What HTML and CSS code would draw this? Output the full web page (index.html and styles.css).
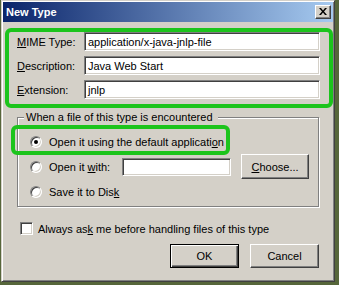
FILE: index.html
```html
<!DOCTYPE html>
<html>
<head>
<meta charset="utf-8">
<link rel="stylesheet" href="styles.css">
</head>
<body>
<div class="window">
  <div class="titlebar">
    <span class="title">New Type</span>
    <span class="close"><svg width="8" height="7" viewBox="0 0 8 7"><path d="M0 0h2l2 2.4L6 0h2L5 3.5 8 7H6L4 4.6 2 7H0l3-3.5z" fill="#000"/></svg></span>
  </div>
  <div class="content">
    <div class="fields">
      <span class="lbl"><u>M</u>IME Type:</span><div class="input">application/x-java-jnlp-file</div>
      <span class="lbl"><u>D</u>escription:</span><div class="input">Java Web Start</div>
      <span class="lbl"><u>E</u>xtension:</span><div class="input">jnlp</div>
    </div>
    <div class="group">
      <span class="legend">When a file of this type is encountered</span>
      <div class="opt"><span class="radio checked"></span><span>Open it using the default applicati<u>o</u>n</span></div>
      <div class="opt"><span class="radio"></span><span class="optlbl">Open it <u>w</u>ith:</span><div class="input small"></div><div class="btn choose"><u>C</u>hoose...</div></div>
      <div class="opt"><span class="radio"></span><span>Save it to Dis<u>k</u></span></div>
    </div>
    <div class="check"><span class="box"></span><span>Always as<u>k</u> me before handling files of this type</span></div>
    <div class="buttons"><div class="btn default">OK</div><div class="btn">Cancel</div></div>
  </div>
  <div class="hl hl1"></div>
  <div class="hl hl2"></div>
</div>
</body>
</html>
```

FILE: styles.css
```css
html, body {
  margin: 0;
  padding: 0;
}
body {
  background: #56663a;
  width: 339px;
  height: 285px;
  overflow: hidden;
  font-family: "Liberation Sans", Arial, sans-serif;
  font-size: 11px;
  color: #000;
}
.window {
  position: relative;
  margin-left: 1px;
  width: 334px;
  height: 282px;
  box-sizing: border-box;
  background: #d4d0c8;
  border: 1px solid;
  border-color: #d4d0c8 #404040 #404040 #d4d0c8;
  padding: 1px;
  box-shadow: inset 1px 1px 0 #fff, inset -1px -1px 0 #808080;
}
.titlebar {
  height: 20px;
  display: flex;
  align-items: center;
  justify-content: space-between;
  padding: 0 2px 0 3px;
  background: linear-gradient(to right, #0a246a, #a6caf0);
}
.title {
  color: #fff;
  font-weight: bold;
  font-size: 11px;
}
.close {
  width: 16px;
  height: 14px;
  box-sizing: border-box;
  background: #d4d0c8;
  border: 1px solid;
  border-color: #fff #404040 #404040 #fff;
  box-shadow: inset -1px -1px 0 #808080;
  display: flex;
  align-items: center;
  justify-content: center;
  padding: 0 1px 1px 0;
}
.content {
  padding: 10px 13px 0 14px;
}
.fields {
  display: grid;
  grid-template-columns: 67px 236px;
  row-gap: 5px;
  align-items: center;
}
.input {
  height: 19px;
  box-sizing: border-box;
  background: #fff;
  border: 1px solid;
  border-color: #808080 #fff #fff #808080;
  box-shadow: inset 1px 1px 0 #404040, inset -1px -1px 0 #d4d0c8;
  padding: 0 3px;
  display: flex;
  align-items: center;
  white-space: nowrap;
}
.group {
  position: relative;
  margin-top: 18px;
  width: 302px;
  height: 90px;
  box-sizing: border-box;
  border: 1px solid #808080;
  box-shadow: 1px 1px 0 #fff, inset 1px 1px 0 #fff;
  padding: 11px 0 0 12px;
}
.legend {
  position: absolute;
  left: 6px;
  top: -7px;
  line-height: 13px;
  padding: 0 5px 0 2px;
  background: #d4d0c8;
}
.opt {
  height: 25px;
  display: flex;
  align-items: center;
}
.radio {
  position: relative;
  width: 12px;
  height: 12px;
  box-sizing: border-box;
  border-radius: 50%;
  background: #fff;
  border: 1px solid;
  border-color: #808080 #fff #fff #808080;
  box-shadow: inset 1px 1px 0 #404040, inset -1px -1px 0 #d4d0c8;
  margin-right: 7px;
  flex: none;
}
.radio.checked::after {
  content: "";
  position: absolute;
  left: 3px;
  top: 3px;
  width: 4px;
  height: 4px;
  border-radius: 50%;
  background: #000;
}
.optlbl {
  width: 73px;
}
.input.small {
  width: 109px;
  height: 18px;
}
.btn {
  height: 24px;
  box-sizing: border-box;
  background: #d4d0c8;
  border: 1px solid;
  border-color: #fff #404040 #404040 #fff;
  box-shadow: inset -1px -1px 0 #808080;
  display: flex;
  align-items: center;
  justify-content: center;
  width: 69px;
}
.btn.choose {
  margin-left: 10px;
  width: 68px;
  height: 25px;
}
.btn.default {
  border: 1px solid #000;
  box-shadow: inset 1px 1px 0 #fff, inset -1px -1px 0 #404040, inset -2px -2px 0 #808080;
}
.check {
  margin-top: 15px;
  display: flex;
  align-items: center;
  height: 13px;
}
.box {
  width: 13px;
  height: 13px;
  box-sizing: border-box;
  background: #fff;
  border: 1px solid;
  border-color: #808080 #fff #fff #808080;
  box-shadow: inset 1px 1px 0 #404040, inset -1px -1px 0 #d4d0c8;
  margin: 0 5px 0 3px;
}
.buttons {
  margin-top: 9px;
  display: flex;
  justify-content: flex-end;
  gap: 11px;
  padding-right: 1px;
}
.hl {
  position: absolute;
  box-sizing: border-box;
  border: 4px solid #1cc41c;
  border-radius: 6px;
}
.hl1 {
  left: 3px;
  top: 27px;
  width: 328px;
  height: 80px;
}
.hl2 {
  left: 9px;
  top: 124px;
  width: 219px;
  height: 30px;
}
```
